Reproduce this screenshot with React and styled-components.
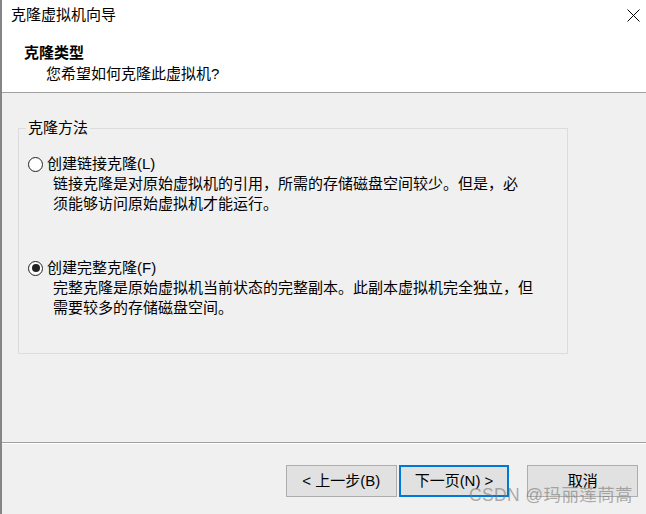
import React from "react";
import styled, { createGlobalStyle } from "styled-components";

const GlobalStyle = createGlobalStyle`
  html, body {
    margin: 0;
    padding: 0;
    background: #f0f0f0;
  }
  * {
    box-sizing: border-box;
  }
`;

const FONT = `"Liberation Sans", "Noto Sans CJK SC", sans-serif`;

const options = [
  {
    id: "linked",
    label: "创建链接克隆(L)",
    lines: [
      "链接克隆是对原始虚拟机的引用，所需的存储磁盘空间较少。但是，必",
      "须能够访问原始虚拟机才能运行。",
    ],
  },
  {
    id: "full",
    label: "创建完整克隆(F)",
    lines: [
      "完整克隆是原始虚拟机当前状态的完整副本。此副本虚拟机完全独立，但",
      "需要较多的存储磁盘空间。",
    ],
  },
];

const App = () => {
  const [selected, setSelected] = React.useState("full");

  return (
    <Window>
      <GlobalStyle />
      <Header>
        <TitleBar>
          <Title>克隆虚拟机向导</Title>
          <CloseButton aria-label="close">
            <svg width="13" height="13" viewBox="0 0 13 13">
              <path d="M0.5 0.5 L12.5 12.5 M12.5 0.5 L0.5 12.5" stroke="#000" strokeWidth="1" />
            </svg>
          </CloseButton>
        </TitleBar>
        <Heading>克隆类型</Heading>
        <Subtitle>您希望如何克隆此虚拟机?</Subtitle>
      </Header>

      <Body>
        <GroupBox>
          <Legend>克隆方法</Legend>
          {options.map((opt) => (
            <Option key={opt.id}>
              <OptionRow onClick={() => setSelected(opt.id)}>
                <Radio checked={selected === opt.id} />
                <span>{opt.label}</span>
              </OptionRow>
              <Description>
                {opt.lines.map((line) => (
                  <div key={line}>{line}</div>
                ))}
              </Description>
            </Option>
          ))}
        </GroupBox>
      </Body>

      <Footer>
        <Button>&lt; 上一步(B)</Button>
        <Button primary>下一页(N) &gt;</Button>
        <Button cancel>取消</Button>
        <Watermark>CSDN @玛丽莲茼蒿</Watermark>
      </Footer>
    </Window>
  );
};

export default App;

const Window = styled.div`
  position: relative;
  width: 646px;
  height: 514px;
  display: flex;
  flex-direction: column;
  border-left: 2px solid #858585;
  background: #f0f0f0;
  font-family: ${FONT};
  font-size: 15px;
  color: #000;
`;

const Header = styled.header`
  background: #fff;
  border-bottom: 1px solid #a0a0a0;
  padding-bottom: 8px;
`;

const TitleBar = styled.div`
  height: 30px;
  display: flex;
  align-items: center;
  justify-content: space-between;
  padding: 0 6px 0 9px;
`;

const Title = styled.div`
  font-size: 15px;
  line-height: 20px;
`;

const CloseButton = styled.div`
  width: 13px;
  height: 13px;
  display: flex;
  margin-top: 1px;
`;

const Heading = styled.div`
  margin-top: 13px;
  padding-left: 22px;
  font-weight: 700;
  line-height: 20px;
`;

const Subtitle = styled.div`
  margin-top: 1px;
  padding-left: 44px;
  line-height: 20px;
`;

const Body = styled.main`
  flex: 1;
  padding: 25px 0 0 16px;
`;

const GroupBox = styled.fieldset`
  width: 550px;
  margin: 0;
  min-width: 0;
  border: 1px solid #dcdcdc;
  padding: 16px 10px 35px 9px;
`;

const Legend = styled.legend`
  padding: 0 2px;
  margin-left: -2px;
  line-height: 20px;
`;

const Option = styled.div`
  & + & {
    margin-top: 44px;
  }
`;

const OptionRow = styled.label`
  display: flex;
  align-items: center;
  gap: 4px;
  line-height: 20px;
  cursor: default;
`;

const Radio = styled.span`
  position: relative;
  display: block;
  width: 15px;
  height: 15px;
  min-width: 15px;
  border-radius: 50%;
  border: 1px solid #222;
  background: #fff;
  &::after {
    content: "";
    display: ${(p) => (p.checked ? "block" : "none")};
    position: absolute;
    left: 2.5px;
    top: 2.5px;
    width: 8px;
    height: 8px;
    border-radius: 50%;
    background: #222;
  }
`;

const Description = styled.div`
  padding-left: 25px;
  line-height: 20px;
`;

const Footer = styled.footer`
  position: relative;
  height: 72px;
  border-top: 1px solid #a0a0a0;
  box-shadow: inset 0 1px 0 #fff;
  display: flex;
  align-items: flex-start;
  padding: 22px 8px 0 284px;
`;

const Button = styled.button`
  width: 111px;
  height: 32px;
  font-family: ${FONT};
  font-size: 15px;
  color: #000;
  background: #e1e1e1;
  border: ${(p) => (p.primary ? "2px solid #0078d7" : "1px solid #adadad")};
  margin-left: ${(p) => (p.primary ? "2px" : p.cancel ? "18px" : "0")};
  padding: 0;
  line-height: 20px;
`;

const Watermark = styled.div`
  position: absolute;
  right: 13px;
  bottom: 8px;
  font-size: 17.5px;
  color: rgba(120, 120, 120, 0.6);
  letter-spacing: 0.4px;
  pointer-events: none;
`;
